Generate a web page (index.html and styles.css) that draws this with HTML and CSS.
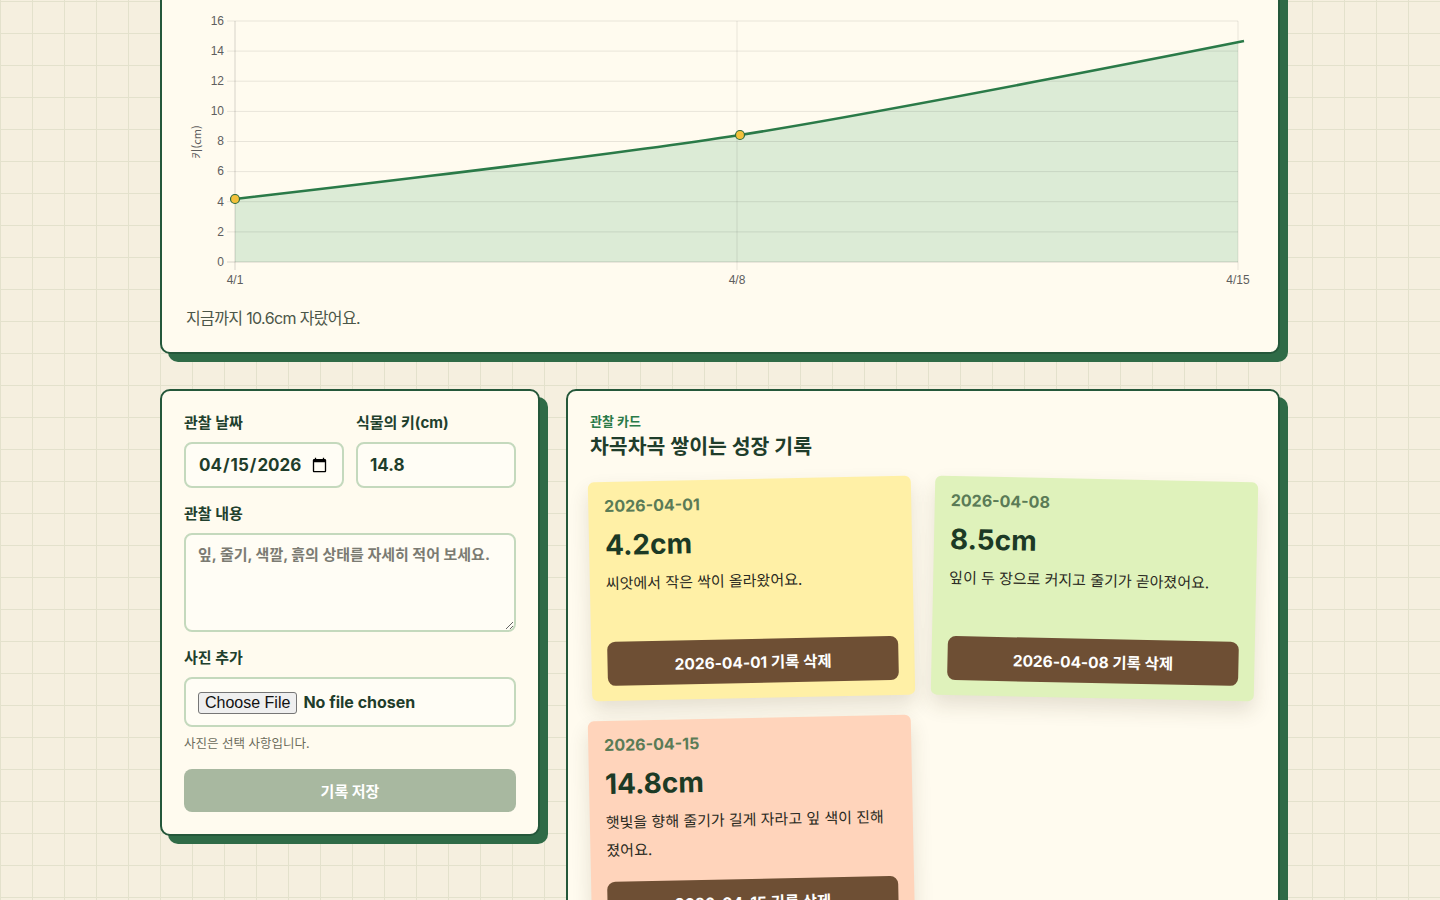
FILE: index.html
```html
<!DOCTYPE html>
<html lang="ko">
<head>
<meta charset="utf-8">
<title>식물 성장 관찰</title>
<link rel="stylesheet" href="styles.css">
</head>
<body>
<main class="page">
  <section class="panel chart-panel">
    <svg class="chart" viewBox="186 -14 1068 310" width="1068" height="310" aria-label="키 성장 그래프">
      <defs>
        <clipPath id="plot"><rect x="235" y="21" width="1003" height="241"/></clipPath>
      </defs>
      <path class="area" clip-path="url(#plot)" d="M235,199 C235,199 589.2,158.6 740,135 C891.9,111.2 1244,41 1244,41 L1244,262 L235,262 Z"/>
      <g class="grid">
        <line x1="227" y1="21" x2="1238" y2="21"/>
        <line x1="227" y1="51.1" x2="1238" y2="51.1"/>
        <line x1="227" y1="81.2" x2="1238" y2="81.2"/>
        <line x1="227" y1="111.4" x2="1238" y2="111.4"/>
        <line x1="227" y1="141.5" x2="1238" y2="141.5"/>
        <line x1="227" y1="171.6" x2="1238" y2="171.6"/>
        <line x1="227" y1="201.7" x2="1238" y2="201.7"/>
        <line x1="227" y1="231.9" x2="1238" y2="231.9"/>
        <line x1="737" y1="21" x2="737" y2="270"/>
        <line x1="1238" y1="21" x2="1238" y2="270"/>
      </g>
      <g class="axis">
        <line x1="227" y1="262" x2="1238" y2="262"/>
        <line x1="235" y1="21" x2="235" y2="270"/>
      </g>
      <path class="line" d="M235,199 C235,199 589.2,158.6 740,135 C891.9,111.2 1244,41 1244,41"/>
      <circle class="dot" cx="235" cy="199" r="4.5"/>
      <circle class="dot" cx="740" cy="135" r="4.5"/>
      <g class="ylabels">
        <text x="224" y="25">16</text>
        <text x="224" y="55">14</text>
        <text x="224" y="85">12</text>
        <text x="224" y="115">10</text>
        <text x="224" y="145">8</text>
        <text x="224" y="175">6</text>
        <text x="224" y="206">4</text>
        <text x="224" y="236">2</text>
        <text x="224" y="266">0</text>
      </g>
      <g class="xlabels">
        <text x="235" y="284">4/1</text>
        <text x="737" y="284">4/8</text>
        <text x="1238" y="284">4/15</text>
      </g>
      <text class="ytitle" x="0" y="0" transform="translate(201 142) rotate(-90)">키(cm)</text>
    </svg>
    <p class="summary">지금까지 10.6cm 자랐어요.</p>
  </section>

  <div class="lower">
    <form class="panel form-panel">
      <div class="field-row">
        <label class="field">
          <span class="label">관찰 날짜</span>
          <input class="input" type="date" value="2026-04-15">
        </label>
        <label class="field">
          <span class="label">식물의 키(cm)</span>
          <input class="input" type="text" value="14.8">
        </label>
      </div>
      <label class="field">
        <span class="label">관찰 내용</span>
        <textarea class="textarea" placeholder="잎, 줄기, 색깔, 흙의 상태를 자세히 적어 보세요."></textarea>
      </label>
      <div class="field">
        <span class="label">사진 추가</span>
        <input class="file" type="file">
        <span class="help">사진은 선택 사항입니다.</span>
      </div>
      <button class="save" type="button">기록 저장</button>
    </form>

    <section class="panel cards-panel">
      <p class="eyebrow">관찰 카드</p>
      <h2 class="title">차곡차곡 쌓이는 성장 기록</h2>
      <div class="cards">
        <article class="card card-yellow">
          <div class="card-date">2026-04-01</div>
          <div class="card-height">4.2cm</div>
          <p class="card-note">씨앗에서 작은 싹이 올라왔어요.</p>
          <button class="delete" type="button">2026-04-01 기록 삭제</button>
        </article>
        <article class="card card-green">
          <div class="card-date">2026-04-08</div>
          <div class="card-height">8.5cm</div>
          <p class="card-note">잎이 두 장으로 커지고 줄기가 곧아졌어요.</p>
          <button class="delete" type="button">2026-04-08 기록 삭제</button>
        </article>
        <article class="card card-peach">
          <div class="card-date">2026-04-15</div>
          <div class="card-height">14.8cm</div>
          <p class="card-note">햇빛을 향해 줄기가 길게 자라고 잎 색이 진해졌어요.</p>
          <button class="delete" type="button">2026-04-15 기록 삭제</button>
        </article>
      </div>
    </section>
  </div>
</main>
</body>
</html>
```

FILE: styles.css
```css
* {
  box-sizing: border-box;
}

html {
  overflow: hidden;
}

body {
  margin: 0;
  background-color: #f5efdf;
  background-image:
    linear-gradient(#e3e1cc 1px, transparent 1px),
    linear-gradient(90deg, #e3e1cc 1px, transparent 1px);
  background-size: 32px 32px;
  background-position: 0 1px, 0 0;
  font-family: "Inter", "Noto Sans CJK KR", sans-serif;
  color: #1f3d2b;
}

.page {
  width: 1120px;
  margin: -40px auto 0;
}

.panel {
  background: #fffbef;
  border: 2px solid #24573a;
  border-radius: 10px;
  box-shadow: 8px 8px 0 #2f6b47;
}

/* chart */
.chart-panel {
  padding: 24px 24px 22px;
}

.chart {
  display: block;
}

.chart .area {
  fill: #dcebd6;
}

.chart .grid line {
  stroke: rgba(0, 0, 0, 0.09);
  stroke-width: 1;
}

.chart .axis line {
  stroke: rgba(0, 0, 0, 0.16);
  stroke-width: 1;
}

.chart .line {
  fill: none;
  stroke: #2a7a48;
  stroke-width: 2.5;
}

.chart .dot {
  fill: #f3c13a;
  stroke: #2d6a3e;
  stroke-width: 1.2;
}

.chart text {
  font-family: "Liberation Sans", Arial, sans-serif;
  font-size: 12px;
  fill: #5e5e5e;
}

.chart .ylabels text {
  text-anchor: end;
}

.chart .xlabels text {
  text-anchor: middle;
}

.chart .ytitle {
  text-anchor: middle;
  font-family: "Noto Sans CJK KR", sans-serif;
  font-size: 11px;
}

.summary {
  margin: 10px 0 0;
  font-size: 16px;
  line-height: 24px;
  color: #4c5648;
  letter-spacing: -0.04em;
}

/* lower row */
.lower {
  display: grid;
  grid-template-columns: 380px 1fr;
  gap: 26px;
  margin-top: 35px;
  align-items: start;
}

.form-panel {
  padding: 22px;
  display: flex;
  flex-direction: column;
  gap: 16px;
}

.field-row {
  display: grid;
  grid-template-columns: minmax(0, 1fr) minmax(0, 1fr);
  gap: 12px;
}

.field {
  display: flex;
  flex-direction: column;
  gap: 9px;
  min-width: 0;
}

.label {
  font-size: 15px;
  line-height: 20px;
  font-weight: 700;
  color: #21402d;
}

.input,
.textarea,
.file {
  width: 100%;
  min-width: 0;
  border: 2px solid #c4d9bd;
  border-radius: 8px;
  background: #fffdf5;
  color: #1f3d2b;
  font-family: "Inter", "Noto Sans CJK KR", sans-serif;
  font-weight: 700;
  outline: none;
}

.input {
  height: 46px;
  padding: 0 12px;
  font-size: 17px;
}

.textarea {
  height: 99px;
  padding: 10px 12px;
  font-size: 15px;
  line-height: 20px;
  resize: vertical;
}

.textarea::placeholder {
  color: #7b7b72;
  font-weight: 700;
}

.file {
  height: 50px;
  padding: 0 12px;
  font-size: 16px;
  line-height: 46px;
}

.file::file-selector-button {
  font-family: "Liberation Sans", Arial, sans-serif;
  font-weight: 400;
  font-size: 16px;
  color: #111;
  background: #efefef;
  border: 1px solid #767676;
  border-radius: 3px;
  padding: 1px 6px;
  margin-right: 6px;
}

.help {
  margin-top: -1px;
  font-size: 12.5px;
  line-height: 18px;
  color: #6b6b5c;
}

.save {
  height: 43px;
  border: 0;
  border-radius: 8px;
  background: #a8b8a0;
  color: #ffffff;
  font-family: "Inter", "Noto Sans CJK KR", sans-serif;
  font-size: 15px;
  font-weight: 700;
}

/* cards panel */
.cards-panel {
  padding: 22px 22px 40px;
  min-height: 560px;
}

.eyebrow {
  margin: 0;
  font-size: 13px;
  line-height: 16px;
  font-weight: 700;
  color: #2a7a48;
}

.title {
  margin: 4px 0 0;
  font-size: 20.5px;
  line-height: 28px;
  font-weight: 700;
  color: #1f3d2b;
}

.cards {
  display: grid;
  grid-template-columns: 1fr 1fr;
  gap: 20px;
  margin-top: 18px;
}

.card {
  display: flex;
  flex-direction: column;
  min-height: 219px;
  padding: 14px 16px 15px;
  border-radius: 6px;
  box-shadow: 0 10px 20px rgba(70, 60, 30, 0.14);
}

.card:nth-child(odd) {
  transform: rotate(-1.2deg);
}

.card:nth-child(even) {
  transform: rotate(1.2deg);
}

.card-yellow {
  background: #fff0a6;
}

.card-green {
  background: #dff2bb;
}

.card-peach {
  background: #ffd4bb;
}

.card-date {
  font-size: 16px;
  line-height: 20px;
  font-weight: 700;
  color: #5a7b56;
}

.card-height {
  margin-top: 11px;
  font-size: 28px;
  line-height: 36px;
  font-weight: 700;
  color: #1c3a25;
}

.card-note {
  margin: 7px 0 17px;
  font-size: 15px;
  line-height: 28px;
  color: #2a2a22;
}

.delete {
  margin-top: auto;
  height: 44px;
  border: 0;
  border-radius: 8px;
  background: #6e4f34;
  color: #ffffff;
  font-family: "Inter", "Noto Sans CJK KR", sans-serif;
  font-size: 15.5px;
  font-weight: 700;
}
```
